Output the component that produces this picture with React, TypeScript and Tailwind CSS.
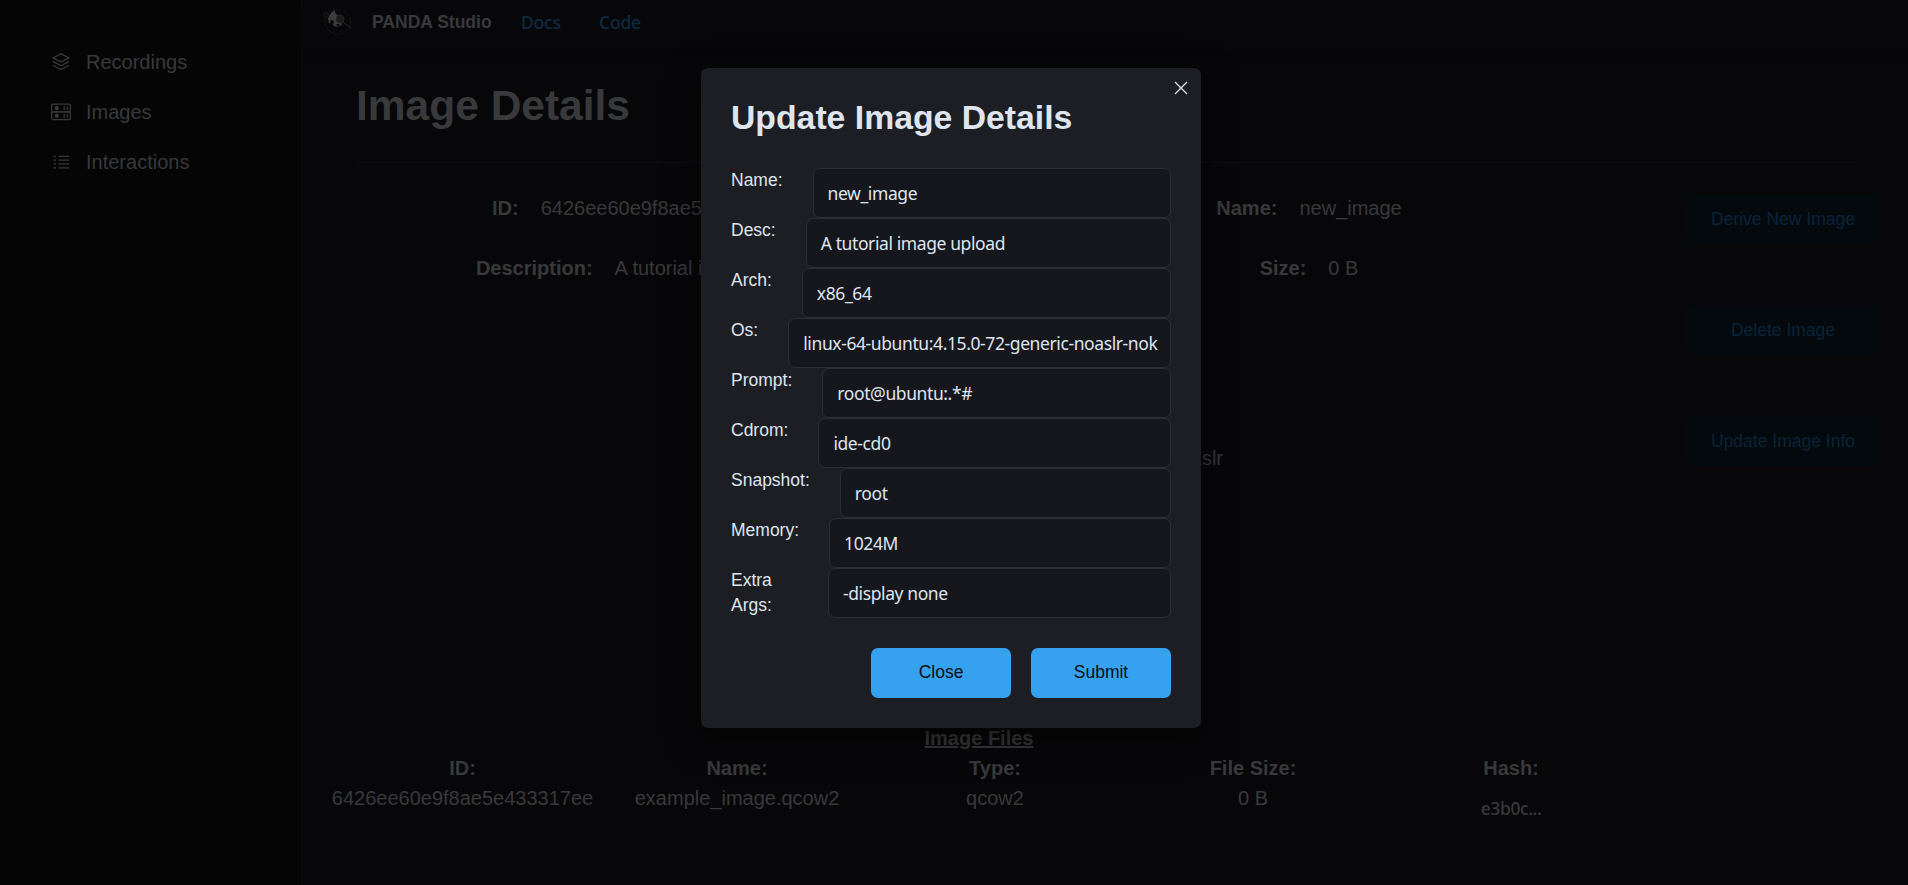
import React from "react";

const nav = ["Recordings", "Images", "Interactions"];

const fields = [
  ["Name:", "new_image"],
  ["Desc:", "A tutorial image upload"],
  ["Arch:", "x86_64"],
  ["Os:", "linux-64-ubuntu:4.15.0-72-generic-noaslr-nok"],
  ["Prompt:", "root@ubuntu:.*#"],
  ["Cdrom:", "ide-cd0"],
  ["Snapshot:", "root"],
  ["Memory:", "1024M"],
  ["Extra Args:", "-display none"],
];

const files = [
  ["ID:", "6426ee60e9f8ae5e433317ee"],
  ["Name:", "example_image.qcow2"],
  ["Type:", "qcow2"],
  ["File Size:", "0 B"],
];

const segoe = "font-['Noto_Sans','Open_Sans',sans-serif]";

function NavIcon({ name }: { name: string }) {
  return (
    <svg width="20" height="20" viewBox="0 0 16 16" fill="none" stroke="currentColor" strokeWidth="1">
      {name === "Recordings" && (
        <>
          <path d="M8 1.300 14.300 4.700 8 8.100 1.700 4.700Z" />
          <path d="M1.500 7.500 8 11l6.500-3.500M1.500 10.600 8 14.100l6.500-3.500" />
        </>
      )}
      {name === "Images" && (
        <>
          <rect x="0.500" y="1.600" width="15" height="6.200" rx="1.200" />
          <rect x="0.500" y="7.800" width="15" height="6.200" rx="1.200" />
          <path d="M10.600 3.300v3M13 3.300v3M10.600 9.500v3M13 9.500v3" />
          <circle cx="4.600" cy="4.800" r="1.200" fill="currentColor" />
          <circle cx="4.600" cy="11" r="1.200" fill="currentColor" />
        </>
      )}
      {name === "Interactions" && (
        <path d="M2 3.400h2M6 3.400h8.500M2 6.400h2M6 6.400h8.500M2 9.500h2M6 9.500h8.500M2 12.600h2M6 12.600h8.500" />
      )}
    </svg>
  );
}

function Logo() {
  return (
    <svg width="30" height="30" viewBox="0 0 30 30">
      <circle cx="16" cy="15" r="12.500" fill="none" stroke="#1a1a1b" strokeWidth="1" strokeDasharray="2 1.500" />
      <path d="M7 9 10 5 13 3 13 6 16 8 20 8 21 12 19 15 20 18 15 20 12 19 10 17 7 16 6 12Z" fill="#3c3c3d" />
      <circle cx="4" cy="8" r="2.500" fill="#0c0c0d" stroke="#1c1c1d" strokeWidth="0.800" />
      <circle cx="16" cy="5" r="2.500" fill="#0a0a0b" />
      <ellipse cx="10" cy="15.500" rx="1.800" ry="2.400" fill="#0a0a0b" />
      <ellipse cx="16" cy="18" rx="1.600" ry="1.300" fill="#0a0a0b" />
      <circle cx="18" cy="12" r="4" fill="#1b1b1c" stroke="#2a2a2b" strokeWidth="0.800" />
      <path d="M21 15 29 21" stroke="#1f1f20" strokeWidth="1.200" />
    </svg>
  );
}

function Pair({ label, value }: { label: string; value: string }) {
  return (
    <div className="flex flex-1 justify-center gap-[22px] whitespace-nowrap">
      <b>{label}</b>
      <span>{value}</span>
    </div>
  );
}

export default function App() {
  return (
    <div className="relative flex h-[885px] w-[1908px] overflow-hidden bg-[#070709] font-['Liberation_Sans',Arial,sans-serif] text-xl leading-[30px] text-[#38393b]">
      <aside className="flex w-[302px] shrink-0 flex-col gap-5 border-r border-[#0d0d0f] bg-[#050505] pt-[47px] pl-[51px]">
        {nav.map((n) => (
          <div key={n} className="flex items-center gap-[15px]">
            <NavIcon name={n} />
            <span>{n}</span>
          </div>
        ))}
      </aside>

      <main className="flex min-w-0 flex-1 flex-col">
        <header className="flex h-[52px] shrink-0 items-start border-b border-[#040405] pl-5 text-[17.5px] shadow-[0_2px_4px_rgba(0,0,0,0.4)]">
          <div className="mt-[7px]">
            <Logo />
          </div>
          <b className="mt-[7px] ml-5 w-[149px] whitespace-nowrap">PANDA Studio</b>
          <span className={`mt-[7px] w-[78px] font-medium tracking-[-0.2px] text-[#0d2a40] ${segoe}`}>Docs</span>
          <span className={`mt-[7px] font-medium tracking-[-0.2px] text-[#0d2a40] ${segoe}`}>Code</span>
        </header>

        <h1 className="mr-[51px] ml-[55px] h-[111px] border-b border-[#0d0e10] pt-[29px] text-[42.5px] leading-[50px] font-bold text-[#38393a]">
          <span className="-ml-px">Image Details</span>
        </h1>

        <div className="flex h-[554px] justify-between pr-[28px] pl-[14px]">
          <div className="flex w-[1324px] flex-col pt-[30px]">
            <div className="flex h-[60px]">
              <Pair label="ID:" value="6426ee60e9f8ae5e433317ee" />
              <Pair label="Name:" value="new_image" />
            </div>
            <div className="flex h-[190px]">
              <Pair label="Description:" value="A tutorial image upload" />
              <Pair label="Size:" value="0 B" />
            </div>
            <div className="flex">
              <Pair label="OS:" value="linux-64-ubuntu:4.15.0-72-generic-noaslr-nokaslr" />
            </div>
          </div>
          <div className="flex w-[194px] flex-col gap-[61px] pt-[31px] text-[17.5px] text-[#0a2338]">
            {["Derive New Image", "Delete Image", "Update Image Info"].map((t) => (
              <button key={t} className="h-[50px] shrink-0 rounded-[7px] bg-[#04090e] pb-px">
                {t}
              </button>
            ))}
          </div>
        </div>

        <div className="mt-[6px] ml-[15px] flex w-[1324px] flex-col">
          <b className="text-center underline">Image Files</b>
          <div className="flex text-center">
            {files.map(([h, v], i) => (
              <div key={h} className={i === 0 ? "w-[291px]" : "w-[258px]"}>
                <b>{h}</b>
                <div>{v}</div>
              </div>
            ))}
            <div className="w-[258px]">
              <b>Hash:</b>
              <div className={`pt-[10px] text-[17.5px] font-medium tracking-[-0.4px] ${segoe}`}>e3b0c...</div>
            </div>
          </div>
        </div>
      </main>

      <div
        role="dialog"
        className="absolute top-[68px] left-[701px] flex h-[660px] w-[500px] flex-col rounded-[7px] bg-[#1d1e24] px-[30px] text-[17.5px] leading-[25px] text-[#dfe5ef] shadow-[0_10px_30px_4px_rgba(0,0,0,0.5)]"
      >
        <svg className="absolute top-[13px] right-[13px]" width="14" height="14" viewBox="0 0 14 14" stroke="currentColor" strokeWidth="1.3">
          <path d="M1 1 13 13M13 1 1 13" />
        </svg>
        <h2 className="h-[100px] pt-[29px] text-[33.75px] leading-[40px] font-bold">Update Image Details</h2>
        {fields.map(([l, v]) => (
          <div key={l} className="flex h-[50px] shrink-0">
            <span className={l === "Extra Args:" ? "mr-[30px] w-[67px]" : "mr-[30px] whitespace-nowrap"}>{l}</span>
            <div
              className={`flex flex-1 items-center rounded-[7px] border border-[#2d2e33] bg-[#16171c] pl-[14px] tracking-[-0.4px] whitespace-nowrap ${segoe}`}
            >
              {v}
            </div>
          </div>
        ))}
        <div className="mt-[30px] flex justify-end gap-5 text-[#0b0c10]">
          <button className="h-[50px] w-[140px] rounded-[7px] bg-[#36a2ef] pb-[2px]">Close</button>
          <button className="h-[50px] w-[140px] rounded-[7px] bg-[#36a2ef] pb-[2px]">Submit</button>
        </div>
      </div>
    </div>
  );
}
